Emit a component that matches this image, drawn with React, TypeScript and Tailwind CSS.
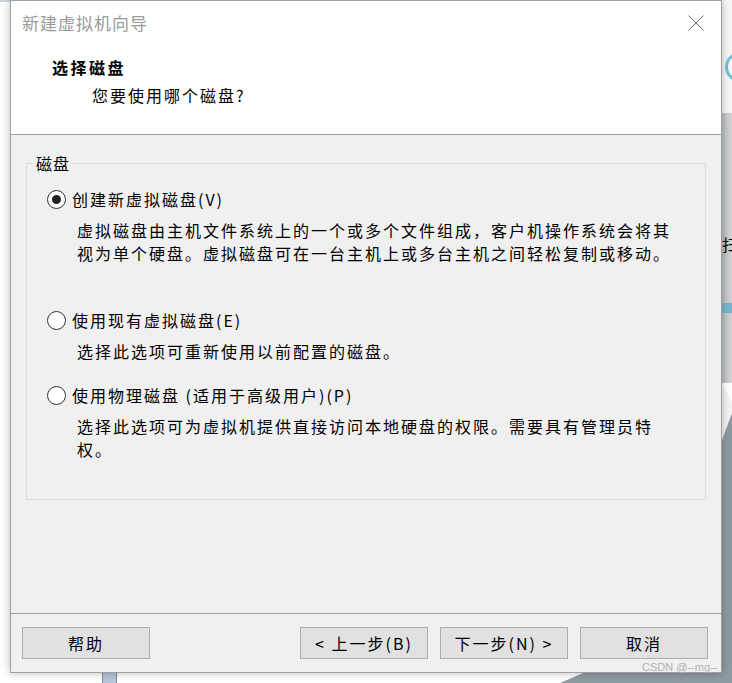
import React from 'react';

const cjk = "font-['Noto_Sans_CJK_SC','Noto_Sans',sans-serif]";

interface RadioProps {
  checked?: boolean;
  label: string;
}

function Radio({ checked, label }: RadioProps) {
  return (
    <div className="flex items-center h-[24px]">
      <div className="w-[19px] h-[19px] rounded-full border-[1.5px] border-[#333] bg-white flex items-center justify-center">
        {checked && <div className="w-[9px] h-[9px] rounded-full bg-[#222]" />}
      </div>
      <span className="ml-[6px] text-[16px] leading-[24px] tracking-[2px] text-black whitespace-nowrap">{label}</span>
    </div>
  );
}

function Desc({ lines }: { lines: string[] }) {
  return (
    <div className="pl-[30px] mt-[8px] text-[16px] leading-[23px] tracking-[2px] text-black">
      {lines.map((l, i) => (
        <div key={i} className="whitespace-nowrap">{l}</div>
      ))}
    </div>
  );
}

function Btn({ children }: { children: React.ReactNode }) {
  return (
    <button className="w-[128px] h-[32px] bg-[#e1e1e1] border border-[#adadad] text-[16px] tracking-[2px] text-black flex items-center justify-center">
      {children}
    </button>
  );
}

export default function App() {
  return (
    <div className={`w-[732px] h-[683px] relative overflow-hidden bg-white ${cjk}`}>
      {/* desktop behind the window */}
      <div className="absolute left-0 top-0 w-[10px] h-[2px] bg-[#c9d3e3]" />
      <div className="absolute right-0 top-0 w-[11px] h-[113px] bg-[#f7f7f7]" />
      <div className="absolute left-[725px] top-[52px] w-[30px] h-[30px] rounded-full border-[3px] border-[#6ec3d6]" />
      <div className="absolute right-0 top-[113px] w-[11px] h-[270px] bg-gradient-to-r from-[#b9bcbf] to-[#d2d4d6]" />
      <div className="absolute left-[722px] top-[234px] text-[16px] leading-[20px] text-black">扫</div>
      <div className="absolute right-0 top-[303px] w-[11px] h-[10px] bg-[#79b6cc]" />
      <div className="absolute right-0 top-[383px] w-[11px] h-[62px] bg-[#f4f4f4] [clip-path:polygon(0_0,100%_30%,100%_70%,0_100%)]" />
      <div className="absolute right-0 top-[383px] w-[11px] h-[300px] bg-[#8f9aa0] [clip-path:polygon(0_20%,100%_10%,100%_100%,0_100%)]" />
      <div className="absolute left-[560px] top-[670px] w-[172px] h-[13px] bg-[#8f9aa0] [clip-path:polygon(30px_0,100%_0,100%_100%,0_100%)]" />
      <div className="absolute left-[102px] top-[672px] w-[15px] h-[11px] bg-[#b8c4dc] border-x border-[#7d8aa3]" />

      <div className="absolute left-[10px] top-0 w-[712px] h-[673px] border border-[#a0a0a0] bg-[#f0f0f0] flex flex-col shadow-[0_0_8px_rgba(0,0,0,0.28)]">
        {/* header */}
        <div className="h-[134px] bg-white border-b border-[#a0a0a0] relative shrink-0">
          <div className="flex items-start justify-between">
            <div className="pl-[11px] pt-[10px] text-[17px] leading-[24px] tracking-[1px] text-[#9a9a9a]">新建虚拟机向导</div>
            <svg width="16" height="16" viewBox="0 0 16 16" className="mt-[14px] mr-[17px]">
              <path d="M0.5 0.5 L15.5 15.5 M15.5 0.5 L0.5 15.5" stroke="#6d6d6d" strokeWidth="1" fill="none" />
            </svg>
          </div>
          <div className="pl-[41px] pt-[20px] text-[16px] leading-[24px] tracking-[2.5px] font-bold text-black">选择磁盘</div>
          <div className="pl-[81px] pt-[4px] text-[16px] leading-[24px] tracking-[2px] text-black">您要使用哪个磁盘?</div>
        </div>

        {/* body */}
        <div className="flex-1 px-[15px] pt-[28px]">
          <div className="relative border border-[#dcdcdc] h-[337px] pl-[20px] pt-[23px]">
            <div className="absolute left-[6px] top-[-13px] bg-[#f0f0f0] px-[3px] text-[16px] leading-[24px] tracking-[1px] text-black">磁盘</div>
            <Radio checked label="创建新虚拟磁盘(V)" />
            <Desc
              lines={[
                '虚拟磁盘由主机文件系统上的一个或多个文件组成，客户机操作系统会将其',
                '视为单个硬盘。虚拟磁盘可在一台主机上或多台主机之间轻松复制或移动。',
              ]}
            />
            <div className="mt-[43px]">
              <Radio label="使用现有虚拟磁盘(E)" />
            </div>
            <Desc lines={['选择此选项可重新使用以前配置的磁盘。']} />
            <div className="mt-[20px]">
              <Radio label="使用物理磁盘 (适用于高级用户)(P)" />
            </div>
            <Desc lines={['选择此选项可为虚拟机提供直接访问本地硬盘的权限。需要具有管理员特', '权。']} />
          </div>
        </div>

        {/* footer */}
        <div className="h-[59px] border-t border-[#a0a0a0] shrink-0 flex items-start pt-[13px] pl-[11px] pr-[13px]">
          <Btn>帮助</Btn>
          <div className="flex-1" />
          <div className="flex gap-[12px]">
            <Btn>&lt; 上一步(B)</Btn>
            <Btn>下一步(N) &gt;</Btn>
            <Btn>取消</Btn>
          </div>
        </div>
      </div>

      <div className="absolute left-[642px] top-[659px] text-[11px] leading-[16px] text-[#b0b0b0] font-['Liberation_Sans',sans-serif]">CSDN @--mg--</div>
    </div>
  );
}
